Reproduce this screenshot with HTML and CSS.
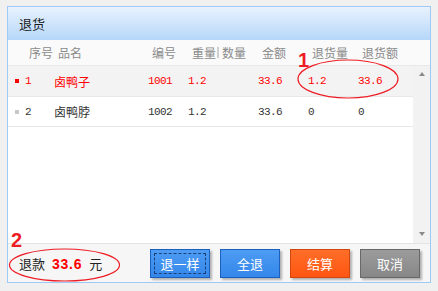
FILE: index.html
```html
<!DOCTYPE html>
<html lang="zh-CN">
<head>
    <meta charset="UTF-8">
    <title>退货</title>
    <link rel="stylesheet" href="styles.css">
</head>
<body>
    <div class="dialog">
        <div class="dialog-title">退货</div>

        <div class="grid-head">
            <span></span>
            <span>序号</span>
            <span>品名</span>
            <span>编号</span>
            <span>重量<i class="sep"></i>数量</span>
            <span>金额</span>
            <span>退货量</span>
            <span>退货额</span>
        </div>

        <div class="grid-body">
            <div class="rows">
                <div class="row active">
                    <span class="mark"></span>
                    <span class="num">1</span>
                    <span>卤鸭子</span>
                    <span class="num">1001</span>
                    <span class="num">1.2</span>
                    <span class="num">33.6</span>
                    <span class="num">1.2</span>
                    <span class="num">33.6</span>
                </div>
                <div class="row">
                    <span class="mark"></span>
                    <span class="num">2</span>
                    <span>卤鸭脖</span>
                    <span class="num">1002</span>
                    <span class="num">1.2</span>
                    <span class="num">33.6</span>
                    <span class="num">0</span>
                    <span class="num">0</span>
                </div>
            </div>
            <div class="scrollbar">
                <span class="arrow up"></span>
                <span class="arrow down"></span>
            </div>
        </div>

        <div class="dialog-foot">
            <div class="refund">退款 <b>33.6</b> 元</div>
            <div class="actions">
                <button class="btn blue focused"><span>退一样</span></button>
                <button class="btn blue"><span>全退</span></button>
                <button class="btn orange"><span>结算</span></button>
                <button class="btn grey"><span>取消</span></button>
            </div>
        </div>
    </div>

    <!-- annotations drawn over the screenshot -->
    <svg class="notes" width="438" height="291" viewBox="0 0 438 291">
        <ellipse cx="348" cy="79" rx="50" ry="19" />
        <ellipse cx="64.5" cy="265" rx="55" ry="16" />
        <text x="298" y="67">1</text>
        <text x="11" y="247">2</text>
    </svg>
</body>
</html>
```

FILE: styles.css
```css
* {
    margin: 0;
    padding: 0;
    box-sizing: border-box;
}

body {
    font-family: "Noto Sans CJK SC", "Liberation Sans", sans-serif;
    font-size: 12px;
    background: #f0f0f0;
    color: #222;
    position: relative;
    width: 438px;
    height: 291px;
    overflow: hidden;
}

.dialog {
    margin: 6px 0 0 7px;
    width: 424px;
    height: 277px;
    border: 1px solid #9ec9f5;
    background: #fff;
    display: flex;
    flex-direction: column;
}

.dialog-title {
    height: 33px;
    line-height: 33px;
    padding-left: 11px;
    font-size: 13px;
    color: #1a1a1a;
    background: linear-gradient(#e8f2fe, #b6d7fa);
}

.grid-head,
.row {
    display: grid;
    grid-template-columns: 17px 29px 94px 40px 70px 50px 50px 1fr;
    align-items: center;
}

.grid-head {
    height: 26px;
    background: #fafafa;
    border-bottom: 1px solid #e8e8e8;
    color: #8a8a8a;
}

.grid-head span {
    padding-left: 4px;
    display: flex;
    align-items: center;
}

.sep {
    display: inline-block;
    width: 2px;
    height: 11px;
    margin: 0 3px 0 1px;
    background: #d0d0d0;
}

.grid-body {
    flex: 1;
    display: flex;
}

.rows {
    flex: 1;
}

.row {
    height: 31px;
    border-bottom: 1px solid #e8e8e8;
    color: #333;
}

.row + .row {
    height: 30px;
}

.row.active {
    background: #f3f3f3;
    color: #ff0000;
}

.mark {
    width: 4px;
    height: 4px;
    margin-left: 7px;
    background: #c8c8c8;
}

.row.active .mark {
    background: #ff0000;
}

.num {
    font-family: "Liberation Mono", monospace;
    font-size: 11px;
    letter-spacing: -0.6px;
}

.scrollbar {
    width: 17px;
    background: #f2f2f2;
    display: flex;
    flex-direction: column;
    justify-content: space-between;
    align-items: center;
    padding: 6px 0 7px 1px;
}

.arrow {
    width: 0;
    height: 0;
    border-left: 3.5px solid transparent;
    border-right: 3.5px solid transparent;
}

.arrow.up {
    border-bottom: 4px solid #8a8a8a;
}

.arrow.down {
    border-top: 4px solid #8a8a8a;
}

.dialog-foot {
    height: 39px;
    background: #f6f6f6;
    border-top: 1px solid #e4e4e4;
    display: flex;
    justify-content: space-between;
    align-items: flex-start;
    padding: 5px 10px 0 11px;
}

.refund {
    font-size: 13px;
    line-height: 29px;
    color: #222;
    word-spacing: 4px;
}

.refund b {
    font-family: "Liberation Sans", Arial, sans-serif;
    font-size: 14px;
    color: #ff0000;
    letter-spacing: 0.8px;
    word-spacing: 0;
}

.actions {
    display: flex;
    gap: 10px;
}

.btn {
    width: 60px;
    height: 29px;
    border: 1px solid;
    color: #fff;
    font-family: "Noto Sans CJK SC", sans-serif;
    font-size: 13px;
    box-shadow: 2px 2px 2px rgba(0, 0, 0, 0.28);
    display: flex;
    align-items: center;
    justify-content: center;
    padding: 3px;
}

.btn span {
    flex: 1;
    align-self: stretch;
    display: flex;
    align-items: center;
    justify-content: center;
    border: 1px dashed transparent;
}

.btn.focused span {
    border-color: #1c3f78;
}

.btn.blue {
    border-color: #1d5fbd;
    background: linear-gradient(#4d9cf4, #3487ea);
}

.btn.orange {
    border-color: #d2470f;
    background: linear-gradient(#ff6e28, #ff5612);
}

.btn.grey {
    border-color: #686868;
    background: linear-gradient(#9c9c9c, #878787);
}

.notes {
    position: absolute;
    top: 0;
    left: 0;
    pointer-events: none;
}

.notes ellipse {
    fill: none;
    stroke: #ee1c24;
    stroke-width: 1.2;
}

.notes text {
    font-family: "Liberation Sans", Arial, sans-serif;
    font-weight: bold;
    font-size: 20px;
    fill: #ee1c24;
}
```
